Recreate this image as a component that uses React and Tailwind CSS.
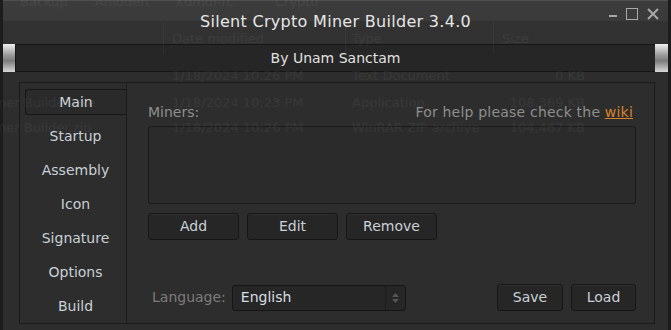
import React from 'react';

const tabs = ['Main', 'Startup', 'Assembly', 'Icon', 'Signature', 'Options', 'Build'];

// faint explorer window showing through the translucent builder
function Ghost() {
  const rows = [
    ['1/18/2024 10:26 PM', 'Text Document', '0 KB', 75],
    ['1/18/2024 10:23 PM', 'Application', '108,369 KB', 102],
    ['1/18/2024 10:26 PM', 'WinRAR ZIP archive', '104,467 KB', 127],
  ];
  return (
    <div className="pointer-events-none absolute inset-0 text-[13px] text-white/[0.05]">
      <span className="absolute left-[20px] top-[-8px]">Backup</span>
      <span className="absolute left-[95px] top-[-8px]">Ahidden</span>
      <span className="absolute left-[175px] top-[-8px]">Xdmdl-rc</span>
      <span className="absolute left-[275px] top-[-8px]">Crypto</span>
      <span className="absolute left-[172px] top-[29px]">Date modified</span>
      <span className="absolute left-[352px] top-[29px]">Type</span>
      <span className="absolute left-[502px] top-[29px]">Size</span>
      <div className="absolute left-[163px] top-[22px] h-[32px] w-px bg-white/[0.04]" />
      <div className="absolute left-[345px] top-[22px] h-[32px] w-px bg-white/[0.04]" />
      <div className="absolute left-[493px] top-[22px] h-[32px] w-px bg-white/[0.04]" />
      {rows.map(([d, t, s, y]) => (
        <React.Fragment key={t}>
          <span className="absolute left-[172px]" style={{ top: y - 9 }}>{d}</span>
          <span className="absolute left-[352px]" style={{ top: y - 9 }}>{t}</span>
          <span className="absolute right-[86px]" style={{ top: y - 9 }}>{s}</span>
        </React.Fragment>
      ))}
      <span className="absolute left-[-2px] top-[93px]">ner Builder.exe</span>
      <span className="absolute left-[-2px] top-[118px]">ner Builder.zip</span>
    </div>
  );
}

function Btn({ children, className = '' }) {
  return (
    <button className={`flex h-[27px] items-center justify-center rounded-[3px] border border-[#161616] bg-[#262626] text-[14px] text-[#c9d0d6] shadow-[inset_0_1px_0_#2f2f2f] ${className}`}>
      {children}
    </button>
  );
}

export default function App() {
  return (
    <div className="relative h-[330px] w-[671px] overflow-hidden bg-[#1c1c1c] font-['DejaVu_Sans',sans-serif]">
      <div className="ml-[3px] flex h-full w-[665px] flex-col bg-[#2d2d2d]">
        {/* Title bar */}
        <div className="relative h-[44px] border-t border-[#505050] bg-[linear-gradient(#3c3c3c_0,#3a3a3a_20px,#323232_20px,#313131_100%)]">
          <div className="pt-[9px] text-center text-[16px] tracking-[0.3px] text-[#e6e6e6]">
            Silent Crypto Miner Builder 3.4.0
          </div>
          <div className="absolute right-[9px] top-[7px] flex items-end gap-[9px] text-[#a8a8a8]">
            <div className="mb-[3px] h-[2px] w-[8px] bg-[#a8a8a8]" />
            <div className="h-[12px] w-[12px] border-[1.5px] border-[#a8a8a8]" />
            <svg width="12" height="12" viewBox="0 0 12 12">
              <path d="M1 1L11 11M11 1L1 11" stroke="#a8a8a8" strokeWidth="2" />
            </svg>
          </div>
        </div>

        {/* Author bar */}
        <div className="flex h-[28px]">
          <div className="w-[12px] bg-[linear-gradient(#f0f0f0,#9a9a9a_40%,#7a7a7a_60%,#d8d8d8)]" />
          <div className="flex flex-1 items-center justify-center border-y border-l border-[#161616] bg-[#262626] text-[14px] text-[#e0e0e0]">
            By Unam Sanctam
          </div>
          <div className="w-[13px] bg-[linear-gradient(#f0f0f0,#9a9a9a_40%,#7a7a7a_60%,#d8d8d8)]" />
        </div>

        {/* Body */}
        <div className="flex-1 pl-[16px] pt-[10px]">
          <div className="flex h-[242px] w-[636px] border border-[#1b1b1b]">
            <div className="flex w-[107px] flex-col gap-[8px] border-r border-[#1b1b1b] pl-[5px] pt-[6px]">
              {tabs.map((t, i) => (
                <div
                  key={t}
                  className={`flex h-[26px] items-center justify-center text-[14px] text-[#c9d0d6] ${
                    i === 0 ? 'rounded-l-[3px] border-y border-l border-[#161616] bg-[#2a2a2a]' : ''
                  }`}
                >
                  {t}
                </div>
              ))}
            </div>

            <div className="flex flex-1 flex-col pl-[21px] pr-[18px] pt-[21px]">
              <div className="flex items-center justify-between text-[14px] leading-[16px]">
                <span className="text-[#8e8e8e]">Miners:</span>
                <span className="pr-[3px] tracking-[0.2px] text-[#8e8e8e]">
                  For help please check the{' '}
                  <span className="text-[#d9822b] underline">wiki</span>
                </span>
              </div>
              <div className="mt-[6px] h-[78px] rounded-[2px] border border-[#1b1b1b] bg-[#2b2b2b]" />
              <div className="mt-[9px] flex gap-[8px]">
                <Btn className="w-[91px]">Add</Btn>
                <Btn className="w-[91px]">Edit</Btn>
                <Btn className="w-[91px]">Remove</Btn>
              </div>
              <div className="mt-[44px] flex items-center">
                <span className="ml-[4px] text-[14px] text-[#7c7c7c]">Language:</span>
                <div className="ml-[6px] flex h-[26px] w-[174px] items-center rounded-[3px] border border-[#161616] bg-[#262626]">
                  <span className="flex-1 pl-[8px] text-[14px] text-[#d8dde2]">English</span>
                  <div className="flex h-full w-[20px] flex-col items-center justify-center gap-[2px] border-l border-[#1d1d1d]">
                    <svg width="7" height="4" viewBox="0 0 7 4"><path d="M0 4L3.5 0L7 4Z" fill="#555" /></svg>
                    <svg width="7" height="4" viewBox="0 0 7 4"><path d="M0 0L3.5 4L7 0Z" fill="#555" /></svg>
                  </div>
                </div>
                <div className="ml-auto flex gap-[8px]">
                  <Btn className="w-[66px]">Save</Btn>
                  <Btn className="w-[65px]">Load</Btn>
                </div>
              </div>
            </div>
          </div>
        </div>
      </div>
      <Ghost />
    </div>
  );
}
